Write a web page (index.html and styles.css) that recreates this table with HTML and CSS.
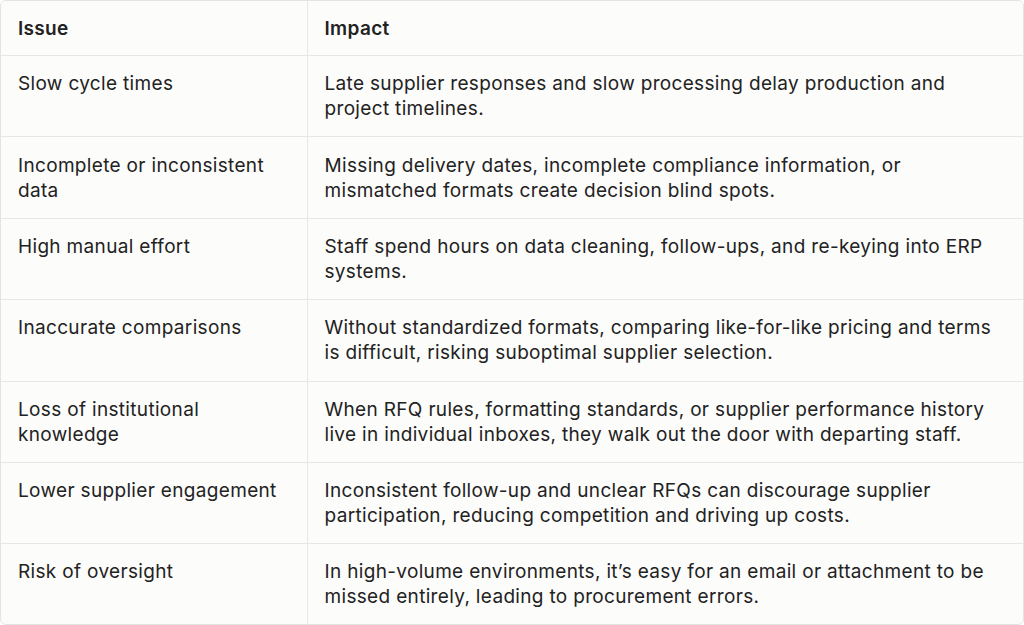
FILE: index.html
```html
<!DOCTYPE html>
<html lang="en">
<head>
<meta charset="utf-8">
<title>Issue / Impact</title>
<link rel="stylesheet" href="styles.css">
</head>
<body>
<div class="wrap">
  <table class="tbl">
    <colgroup><col class="c1"><col class="c2"></colgroup>
    <thead>
      <tr><th>Issue</th><th>Impact</th></tr>
    </thead>
    <tbody>
      <tr><td>Slow cycle times</td><td>Late supplier responses and slow processing delay production and project timelines.</td></tr>
      <tr><td>Incomplete or inconsistent data</td><td>Missing delivery dates, incomplete compliance information, or mismatched formats create decision blind spots.</td></tr>
      <tr><td>High manual effort</td><td>Staff spend hours on data cleaning, follow-ups, and re-keying into ERP systems.</td></tr>
      <tr><td>Inaccurate comparisons</td><td>Without standardized formats, comparing like-for-like pricing and terms is difficult, risking suboptimal supplier selection.</td></tr>
      <tr><td>Loss of institutional knowledge</td><td>When RFQ rules, formatting standards, or supplier performance history live in individual inboxes, they walk out the door with departing staff.</td></tr>
      <tr><td>Lower supplier engagement</td><td>Inconsistent follow-up and unclear RFQs can discourage supplier participation, reducing competition and driving up costs.</td></tr>
      <tr><td>Risk of oversight</td><td>In high-volume environments, it’s easy for an email or attachment to be missed entirely, leading to procurement errors.</td></tr>
    </tbody>
  </table>
</div>
</body>
</html>
```
FILE: styles.css
```css
html, body {
  margin: 0;
  padding: 0;
  background: #ffffff;
}
body {
  font-family: Inter, "Noto Sans", Arial, sans-serif;
  color: #222222;
}
.wrap {
  box-sizing: border-box;
  width: 1024px;
  height: 625px;
  border: 1px solid #e4e4e2;
  border-radius: 6px;
  overflow: hidden;
  background: #fcfcfb;
}
.tbl {
  width: 100%;
  border-collapse: collapse;
  table-layout: fixed;
}
.c1 { width: 306px; }
.tbl th, .tbl td {
  text-align: left;
  vertical-align: top;
  font-size: 19px;
  line-height: 25px;
  padding: 15.2px 17px 15.2px 17px;
  border-bottom: 1px solid #e6e6e4;
  letter-spacing: 0.33px;
}
.tbl th {
  font-weight: 600;
  padding-top: 14.5px;
  padding-bottom: 14.5px;
}
.tbl th + th, .tbl td + td {
  border-left: 1px solid #e6e6e4;
}
.tbl tbody tr:last-child td {
  border-bottom: none;
}
```
